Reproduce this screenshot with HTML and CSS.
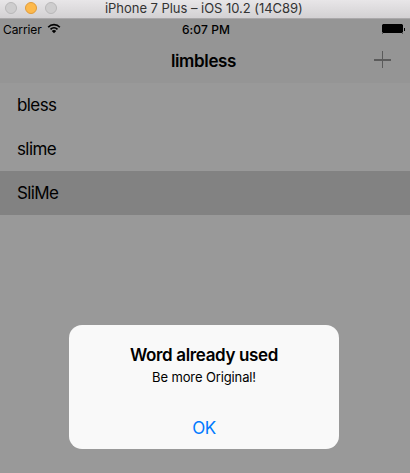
FILE: index.html
```html
<!DOCTYPE html>
<html lang="en">
<head>
<meta charset="utf-8">
<title>limbless</title>
<link rel="stylesheet" href="styles.css">
</head>
<body>
<div class="window">
  <header class="titlebar">
    <div class="lights"><i class="light"></i><i class="light light-min"></i><i class="light"></i></div>
    <span class="window-title">iPhone 7 Plus – iOS 10.2 (14C89)</span>
  </header>
  <main class="screen">
    <div class="statusbar">
      <div class="signal"><span class="carrier">Carrier</span>
        <svg class="wifi" width="14" height="11" viewBox="0 0 14 11" fill="none" stroke="#000"><path d="M1.2 4.2C4.3.8 9.7.8 12.8 4.2M3.5 6.4c2-2 5-2 7 0" stroke-width="1.7"/><path d="M4.8 8C6 6.8 8 6.8 9.2 8L7 10.3z" fill="#000" stroke="none"/></svg>
      </div>
      <span class="time">6:07 PM</span>
      <svg class="battery" width="23" height="10" viewBox="0 0 23 10"><rect x="0" y="0" width="21" height="9"/><path d="M0 0h1v1H0zM0 8h1v2H0zM20 0h1v1h-1zM20 8h1v2h-1z" fill="#555"/><path d="M22 4h1v3h-1z"/></svg>
    </div>
    <nav class="navbar">
      <h1 class="nav-title">limbless</h1>
      <svg class="add" width="17" height="17" viewBox="0 0 17 17"><path d="M0 8h17v2H0z"/><path d="M8 0h1v17H8z"/></svg>
    </nav>
    <ul class="words">
      <li class="word">bless</li>
      <li class="word">slime</li>
      <li class="word word-selected">SliMe</li>
    </ul>
    <section class="alert" role="alertdialog">
      <h2 class="alert-title">Word already used</h2>
      <p class="alert-message">Be more Original!</p>
      <button class="alert-ok">OK</button>
    </section>
  </main>
</div>
</body>
</html>
```
FILE: styles.css
```css
* { box-sizing: border-box; }
body { margin: 0; font-family: Inter, "Liberation Sans", sans-serif; color: #000; }
h1, h2, p, ul { margin: 0; padding: 0; }
.window { width: 410px; height: 473px; overflow: hidden; display: flex; flex-direction: column; }
.titlebar { height: 19px; flex: none; display: grid; grid-template-columns: 105px 1fr; background: linear-gradient(#e8e6e8, #d3d1d3); border-bottom: 1px solid #aaa8aa; }
.lights { display: flex; gap: 8px; padding: 2px 0 0 5px; }
.light { width: 12px; height: 12px; border-radius: 50%; background: #cecdce; border: 1px solid #b9b8b9; }
.light-min { background: #fdb94c; border-color: #e09b3a; }
.window-title { font-size: 13px; line-height: 17px; letter-spacing: -.04px; color: #333; white-space: nowrap; }
.screen { position: relative; flex: 1; background: #999; }
.statusbar { height: 20px; background: #959595; display: grid; grid-template-columns: 1fr auto 1fr; padding: 0 5px 0 3px; }
.signal { display: flex; gap: 6px; }
.carrier { font-size: 12px; line-height: 21px; letter-spacing: -.1px; }
.wifi { margin: 4px 0 0 -1px; }
.time { font-size: 12px; font-weight: 500; line-height: 21px; letter-spacing: .1px; padding-left: 4px; }
.battery { justify-self: end; margin-top: 5px; }
.navbar { height: 44px; background: #959595; display: grid; grid-template-columns: 1fr auto 1fr; padding: 0 19px 0 16px; }
.nav-title { grid-column: 2; font-size: 17px; line-height: 45px; font-weight: 600; letter-spacing: -.35px; }
.add { justify-self: end; margin-top: 12px; fill: #5b5b5b; }
.words { list-style: none; }
.word { height: 44px; padding-left: 17px; font-size: 17px; line-height: 44px; letter-spacing: -.6px; }
.word-selected { background: #828282; }
.alert { position: absolute; left: 69px; top: 306px; width: 270px; height: 124px; border-radius: 13px; background: #f9f9f9; text-align: center; padding-top: 20px; }
.alert-title { font-size: 17px; line-height: 21px; font-weight: 600; letter-spacing: -.35px; }
.alert-message { font-size: 13px; line-height: 22px; letter-spacing: -.12px; }
.alert-ok { display: block; width: 100%; height: 44px; margin-top: 18px; padding: 0; border: 0; background: none; color: #007aff; font: 17px/44px Inter, sans-serif; letter-spacing: -.4px; }
```
